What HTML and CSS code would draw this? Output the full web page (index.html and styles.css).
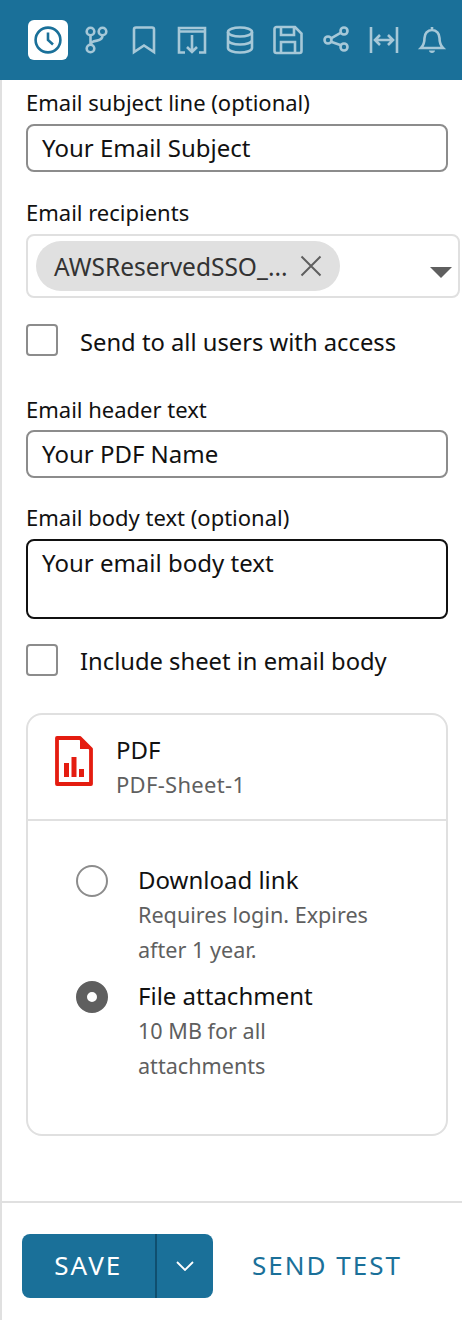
FILE: index.html
```html
<!DOCTYPE html>
<html lang="en">
<head>
    <meta charset="UTF-8">
    <meta name="viewport" content="width=device-width, initial-scale=1.0">
    <title>Email report</title>
    <link rel="stylesheet" href="styles.css">
</head>
<body>
    <div class="toolbar">
        <div class="tool active">
            <svg width="30" height="30" viewBox="0 0 30 30"><circle cx="15" cy="15" r="12.400"/><path d="M15 7.500V15l5 4.500"/></svg>
        </div>
        <div class="tool">
            <svg width="30" height="30" viewBox="0 0 30 30"><circle cx="9.500" cy="6.500" r="3.800"/><circle cx="21.500" cy="6.500" r="3.800"/><circle cx="9.500" cy="23.500" r="3.800"/><path d="M9.500 10.300v9.400M21.500 10.300c0 3.600-2.200 4.800-5.500 5.300-3.200.5-6.500 1-6.500 4.100"/></svg>
        </div>
        <div class="tool">
            <svg width="30" height="30" viewBox="0 0 30 30"><path d="M5 27V4.500a2 2 0 0 1 2-2h16a2 2 0 0 1 2 2V27l-10-6.500z"/></svg>
        </div>
        <div class="tool">
            <svg width="30" height="30" viewBox="0 0 30 30"><path d="M8 27.500H2V3h26v24.500h-6M2 6.500h26M15 10v17M10 22l5 5 5-5"/></svg>
        </div>
        <div class="tool">
            <svg width="30" height="30" viewBox="0 0 30 30"><ellipse cx="15" cy="7" rx="12" ry="4.500"/><path d="M3 7v16c0 2.500 5.400 4.500 12 4.500s12-2 12-4.500V7M3 15c0 2.500 5.400 4.500 12 4.500s12-2 12-4.500"/></svg>
        </div>
        <div class="tool">
            <svg width="30" height="30" viewBox="0 0 30 30"><path d="M3.500 2H22l6.500 6.500V26a2 2 0 0 1-2 2h-23a2 2 0 0 1-2-2V4a2 2 0 0 1 2-2zM8 2v8h13V2M8 28V17h14v11"/></svg>
        </div>
        <div class="tool">
            <svg width="30" height="30" viewBox="0 0 30 30"><circle cx="7" cy="15" r="3.500"/><circle cx="23" cy="6" r="3.500"/><circle cx="23" cy="22" r="3.500"/><path d="M10 13.300 20 7.700M10 16.700l10 3.600"/></svg>
        </div>
        <div class="tool">
            <svg width="30" height="30" viewBox="0 0 30 30"><path d="M2 2v26M28 2v26M6 15h18M11 10l-5 5 5 5M19 10l5 5-5 5"/></svg>
        </div>
        <div class="tool">
            <svg width="30" height="30" viewBox="0 0 30 30"><path d="M4 23h22c-3-3-3.500-5.500-3.500-10C22.500 8.500 19.500 5 15 5s-7.500 3.500-7.500 8c0 4.500-.5 7-3.500 10zM15 2v3"/><path class="filled" d="M12 25.500h6c0 1.400-1.300 2.500-3 2.500s-3-1.100-3-2.500z"/></svg>
        </div>
    </div>

    <div class="panel">
        <div class="form">
            <label class="field-label subject-label">Email subject line (optional)</label>
            <div class="input">Your Email Subject</div>

            <label class="field-label recipients-label">Email recipients</label>
            <div class="multiselect">
                <span class="chip">
                    AWSReservedSSO_...
                    <svg width="22" height="22" viewBox="0 0 22 22" fill="none" stroke="#5f5f5f" stroke-width="2"><path d="M1.500 1.500l19 19M20.500 1.500l-19 19"/></svg>
                </span>
                <span class="caret"></span>
            </div>

            <div class="check-row">
                <span class="checkbox"></span>
                <span class="check-text">Send to all users with access</span>
            </div>

            <label class="field-label header-label">Email header text</label>
            <div class="input">Your PDF Name</div>

            <label class="field-label">Email body text (optional)</label>
            <div class="input textarea">Your email body text</div>

            <div class="check-row second">
                <span class="checkbox"></span>
                <span class="check-text">Include sheet in email body</span>
            </div>

            <div class="card">
                <div class="card-head">
                    <svg width="38" height="50" viewBox="0 0 38 50"><path d="M2 2h23l11 11v35H2z" fill="none" stroke="#e41c10" stroke-width="3.800" stroke-linejoin="round"/><path d="M25 2v11h11z" fill="#e41c10"/><path d="M9 27h5v14H9zM16.500 21h5v20h-5zM24 33h5v8h-5z" fill="#e41c10"/></svg>
                    <div>
                        <div class="card-title">PDF</div>
                        <div class="card-sub">PDF-Sheet-1</div>
                    </div>
                </div>
                <div class="card-body">
                    <div class="option">
                        <span class="radio"></span>
                        <div>
                            <div class="option-title">Download link</div>
                            <div class="option-desc">Requires login. Expires<br>after 1 year.</div>
                        </div>
                    </div>
                    <div class="option">
                        <span class="radio on"></span>
                        <div>
                            <div class="option-title">File attachment</div>
                            <div class="option-desc">10 MB for all<br>attachments</div>
                        </div>
                    </div>
                </div>
            </div>
        </div>

        <div class="footer">
            <div class="split-btn">
                <span class="save">SAVE</span>
                <span class="more">
                    <svg width="18" height="10" viewBox="0 0 18 10" fill="none" stroke="#fff" stroke-width="1.800"><path d="M1 1l8 8 8-8"/></svg>
                </span>
            </div>
            <span class="send-test">SEND TEST</span>
        </div>
    </div>
</body>
</html>
```

FILE: styles.css
```css
body {
    font-family: 'Noto Sans', 'Open Sans', sans-serif;
    margin: 0;
    width: 462px;
    height: 1320px;
    overflow: hidden;
    background-color: #fff;
    color: #111;
}

.toolbar {
    height: 80px;
    background-color: #1a7099;
    display: flex;
    align-items: center;
    padding-left: 28px;
}

.tool {
    width: 40px;
    height: 40px;
    margin-right: 8px;
    display: flex;
    align-items: center;
    justify-content: center;
    flex-shrink: 0;
}

.tool svg {
    fill: none;
    stroke: #a6c8d8;
    stroke-width: 2.600;
}

.tool svg .filled {
    fill: #a6c8d8;
    stroke: none;
}

.tool.active {
    background-color: #fff;
    border-radius: 6px;
}

.tool.active svg {
    stroke: #1a7099;
    stroke-width: 2.600;
}

.panel {
    height: 1240px;
    border-left: 2px solid #e0e0e0;
    display: flex;
    flex-direction: column;
}

.form {
    flex-grow: 1;
    padding: 0 14px 0 24px;
}

.field-label {
    display: block;
    font-size: 22px;
    line-height: 28px;
    margin: 25px 0 8px;
}

.field-label.subject-label {
    margin: 8px 0 8px;
}

.field-label.recipients-label {
    margin-top: 26px;
}

.field-label.header-label {
    margin: 39px 0 7px;
}

.input {
    height: 48px;
    box-sizing: border-box;
    border: 2px solid #8c8c8c;
    border-radius: 8px;
    padding: 0 14px;
    font-size: 24px;
    line-height: 44px;
}

.textarea {
    height: 80px;
    border-color: #111;
}

.multiselect {
    height: 64px;
    width: 434px;
    box-sizing: border-box;
    border: 2px solid #e0e0e0;
    border-radius: 8px;
    display: flex;
    align-items: center;
    padding: 0 6px 0 8px;
}

.chip {
    height: 50px;
    width: 304px;
    box-sizing: border-box;
    border-radius: 25px;
    background-color: #e0e0e0;
    display: flex;
    align-items: center;
    justify-content: space-between;
    padding: 0 18px;
    font-size: 24.500px;
    color: #333;
}

.caret {
    margin: 12px 0 0 auto;
    border-left: 11px solid transparent;
    border-right: 11px solid transparent;
    border-top: 11px solid #5f5f5f;
}

.check-row {
    display: flex;
    align-items: flex-start;
    gap: 22px;
    height: 32px;
    margin-top: 26px;
    font-size: 23.750px;
    line-height: 32px;
}

.check-row.second {
    margin-top: 25px;
}

.check-text {
    margin-top: 2px;
}

.check-row.second .check-text {
    margin-top: 1px;
}

.checkbox {
    width: 32px;
    height: 32px;
    box-sizing: border-box;
    border: 2px solid #8c8c8c;
    border-radius: 4px;
}

.card {
    margin-top: 37px;
    height: 423px;
    box-sizing: border-box;
    border: 2px solid #e0e0e0;
    border-radius: 16px;
}

.card-head {
    height: 106px;
    box-sizing: border-box;
    border-bottom: 2px solid #e0e0e0;
    display: flex;
    align-items: flex-start;
    gap: 23px;
    padding: 21px 0 0 27px;
}

.card-title {
    font-size: 24px;
    line-height: 28px;
}

.card-sub {
    margin-top: 3px;
    font-size: 22px;
    letter-spacing: 0.300px;
    line-height: 34px;
    color: #5f5f5f;
}

.card-body {
    padding: 44px 0 0 48px;
}

.option {
    display: flex;
    gap: 30px;
    margin-bottom: 14px;
}

.option-title {
    margin-bottom: 2px;
    font-size: 24px;
    line-height: 30px;
}

.option-desc {
    font-size: 21.600px;
    line-height: 35px;
    color: #5f5f5f;
}

.radio {
    width: 32px;
    height: 32px;
    box-sizing: border-box;
    border: 2px solid #8c8c8c;
    border-radius: 50%;
    flex-shrink: 0;
}

.radio.on {
    border: 11px solid #5f5f5f;
    background-color: #fff;
}

.footer {
    height: 119px;
    box-sizing: border-box;
    border-top: 2px solid #e0e0e0;
    display: flex;
    align-items: flex-start;
    padding: 31px 0 0 20px;
}

.split-btn {
    display: flex;
    height: 64px;
    width: 191px;
    border-radius: 8px;
    overflow: hidden;
    background-color: #1a7099;
    color: #fff;
}

.save {
    width: 134px;
    font-size: 26px;
    letter-spacing: 2px;
    line-height: 62px;
    text-align: center;
}

.more {
    width: 57px;
    border-left: 2px solid #0f4f6f;
    display: flex;
    align-items: center;
    justify-content: center;
}

.send-test {
    margin-left: 39px;
    font-size: 26px;
    letter-spacing: 2px;
    line-height: 62px;
    color: #1a7099;
}
```
